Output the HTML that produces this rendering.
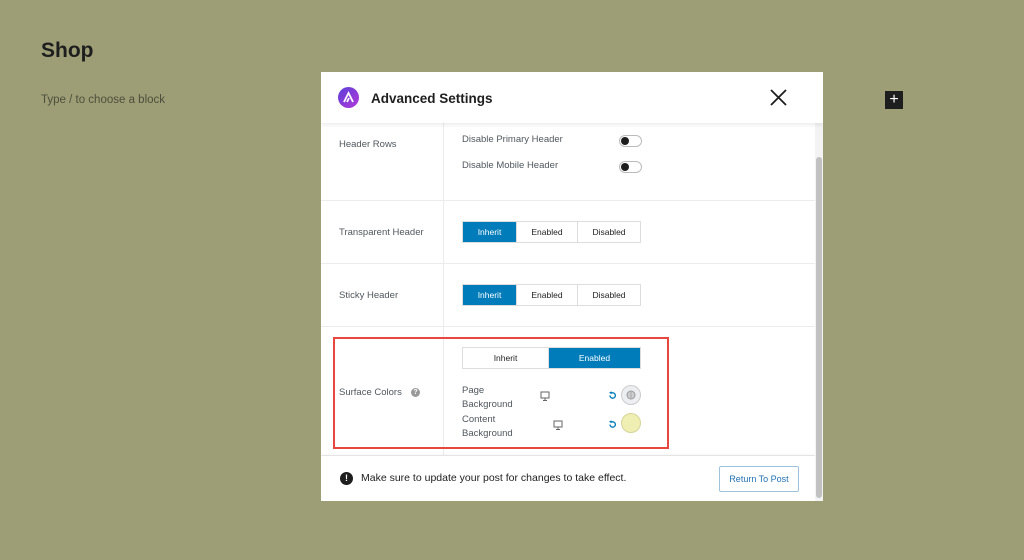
<!DOCTYPE html>
<html><head><style>
*{margin:0;padding:0;box-sizing:border-box}
body{width:1024px;height:560px;background:#9d9e76;font-family:"Liberation Sans",sans-serif;position:relative;overflow:hidden;color:#1e1e1e}
.abs{position:absolute}
.modal{left:321px;top:72px;width:502px;height:429px;background:#fff;overflow:hidden}
.hdr{left:0;top:0;width:502px;height:51px;background:#fff;box-shadow:0 2px 4px rgba(0,0,0,.08);z-index:2}
.lbl{font-size:9.5px;color:#50575e}
.line{background:#ececec}
.seg{display:flex;border:1px solid #ddd;height:22px;font-size:8.5px}
.seg div{display:flex;align-items:center;justify-content:center;border-right:1px solid #ddd;color:#1e1e1e}
.seg div:last-child{border-right:none}
.seg .on{background:#007cba;color:#fff}
.tog{width:23px;height:12px;border:1px solid #bbb;border-radius:6px}
.tog:after{content:"";position:absolute;left:1px;top:1px;width:8px;height:8px;border-radius:50%;background:#1e1e1e}
</style></head><body>
<div class="abs" style="left:41px;top:39px;font-size:21px;font-weight:bold;color:#1e1e1e">Shop</div>
<div class="abs" style="left:41px;top:94px;font-size:11.5px;color:#4d4f3c">Type / to choose a block</div>
<div class="abs" style="left:885px;top:91px;width:18px;height:18px;background:#1e1e1e;color:#fff;font-size:16px;line-height:17px;text-align:center">+</div>

<div class="abs modal">
 <div class="abs hdr">
  <div class="abs" style="left:17px;top:15px;width:21px;height:21px;border-radius:50%;background:linear-gradient(135deg,#5b3fd8,#b23ad9)"></div>
  <svg class="abs" style="left:17px;top:15px" width="21" height="21"><path d="M6 15 L10.5 6 L15 15 M9 15 L11 11" stroke="#fff" stroke-width="1.8" fill="none"/></svg>
  <div class="abs" style="left:50px;top:19px;font-size:13.5px;font-weight:bold">Advanced Settings</div>
  <svg class="abs" style="left:449px;top:17px" width="17" height="17"><path d="M1 1L16 16M16 1L1 16" stroke="#1e1e1e" stroke-width="1.8"/></svg>
 </div>
 <div class="abs line" style="left:122px;top:51px;width:1px;height:334px"></div>
 <div class="abs line" style="left:0;top:128px;width:494px;height:1px"></div>
 <div class="abs line" style="left:0;top:191px;width:494px;height:1px"></div>
 <div class="abs line" style="left:0;top:254px;width:494px;height:1px"></div>
 <div class="abs line" style="left:0;top:383px;width:494px;height:1px"></div>

 <div class="abs lbl" style="left:18px;top:67px">Header Rows</div>
 <div class="abs lbl" style="left:141px;top:62px">Disable Primary Header</div>
 <div class="abs lbl" style="left:141px;top:88px">Disable Mobile Header</div>
 <div class="abs tog" style="left:298px;top:63px"></div>
 <div class="abs tog" style="left:298px;top:89px"></div>

 <div class="abs lbl" style="left:18px;top:155px">Transparent Header</div>
 <div class="abs seg" style="left:141px;top:149px;width:179px"><div class="on" style="width:54px">Inherit</div><div style="width:61px">Enabled</div><div style="flex:1">Disabled</div></div>

 <div class="abs lbl" style="left:18px;top:218px">Sticky Header</div>
 <div class="abs seg" style="left:141px;top:212px;width:179px"><div class="on" style="width:54px">Inherit</div><div style="width:61px">Enabled</div><div style="flex:1">Disabled</div></div>

 <div class="abs" style="left:12px;top:265px;width:336px;height:112px;border:2px solid #e8473f"></div>
 <div class="abs lbl" style="left:18px;top:315px">Surface Colors</div>
 <div class="abs" style="left:90px;top:316px;width:9px;height:9px;border-radius:50%;background:#999;color:#fff;font-size:7px;line-height:9px;text-align:center;font-weight:bold">?</div>
 <div class="abs seg" style="left:141px;top:275px;width:179px"><div style="width:86px">Inherit</div><div class="on" style="flex:1">Enabled</div></div>
 <div class="abs lbl" style="left:141px;top:312px;line-height:14px;width:70px">Page<br>Background</div>
 <div class="abs lbl" style="left:141px;top:341px;line-height:14px;width:70px">Content<br>Background</div>
 <svg class="abs" style="left:219px;top:319px" width="10" height="10"><rect x="1" y="1" width="8" height="6" fill="none" stroke="#666"/><path d="M5 7V9M3 9.5H7" stroke="#666"/></svg>
 <svg class="abs" style="left:232px;top:348px" width="10" height="10"><rect x="1" y="1" width="8" height="6" fill="none" stroke="#666"/><path d="M5 7V9M3 9.5H7" stroke="#666"/></svg>
 <svg class="abs" style="left:287px;top:319px" width="9" height="9"><path d="M2 4.5A2.7 2.7 0 1 0 4.5 1.8H3" stroke="#007cba" stroke-width="1.3" fill="none"/><path d="M1 1.8L3.5 0.3V3.3Z" fill="#007cba"/></svg>
 <svg class="abs" style="left:287px;top:348px" width="9" height="9"><path d="M2 4.5A2.7 2.7 0 1 0 4.5 1.8H3" stroke="#007cba" stroke-width="1.3" fill="none"/><path d="M1 1.8L3.5 0.3V3.3Z" fill="#007cba"/></svg>
 <div class="abs" style="left:300px;top:313px;width:20px;height:20px;border-radius:50%;background:#eceef2;border:1px solid #ccc"></div>
 <svg class="abs" style="left:305px;top:318px" width="10" height="10"><circle cx="5" cy="5" r="4" fill="none" stroke="#999"/><path d="M1 5H9M5 1V9M2 3H8M2 7H8" stroke="#999" stroke-width=".7"/></svg>
 <div class="abs" style="left:300px;top:341px;width:20px;height:20px;border-radius:50%;background:#efeeb3;border:1px solid #d6d49a"></div>

 <div class="abs" style="left:0;top:384px;width:494px;height:45px;background:#fff;box-shadow:0 -2px 3px rgba(0,0,0,.04)"></div>
 <div class="abs" style="left:19px;top:400px;width:13px;height:13px;border-radius:50%;background:#1e1e1e;color:#fff;font-size:9px;font-weight:bold;text-align:center;line-height:13px">!</div>
 <div class="abs" style="left:40px;top:400px;font-size:10.5px;color:#1e1e1e">Make sure to update your post for changes to take effect.</div>
 <div class="abs" style="left:398px;top:394px;width:80px;height:26px;border:1px solid #9ec2dd;border-radius:2px;color:#2271b1;font-size:9px;text-align:center;line-height:24px">Return To Post</div>

 <div class="abs" style="left:494px;top:51px;width:8px;height:378px;background:#f3f3f3"></div>
 <div class="abs" style="left:495px;top:85px;width:6px;height:341px;background:#c1c1c1;border-radius:3px"></div>
</div>
</body></html>
